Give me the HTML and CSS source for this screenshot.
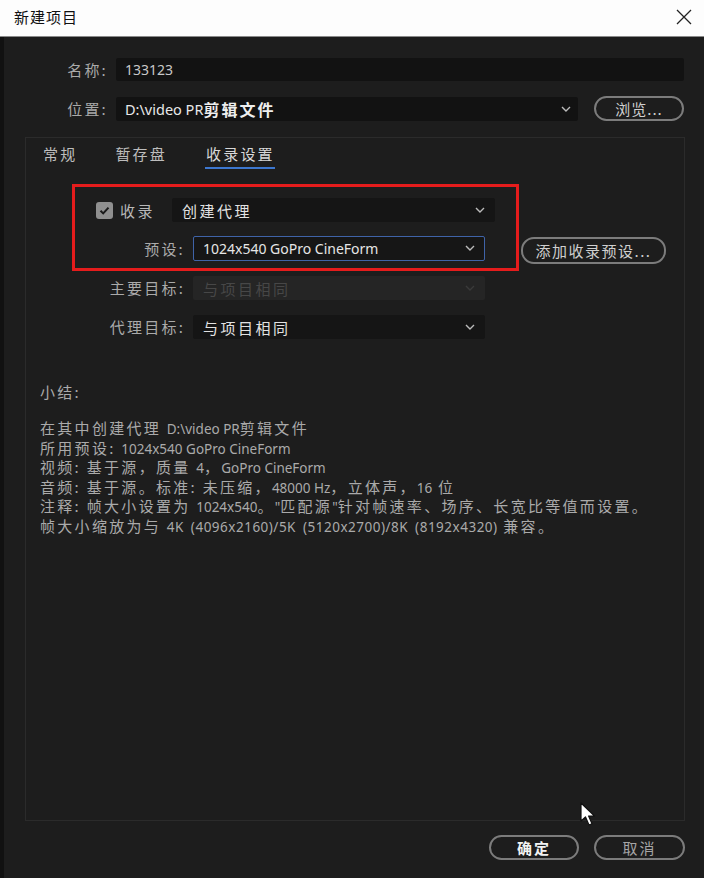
FILE: index.html
```html
<!DOCTYPE html>
<html lang="zh">
<head>
<meta charset="utf-8">
<link rel="stylesheet" href="styles.css">
</head>
<body>
<div class="window">
  <div class="titlebar">
    <span class="title">新建项目</span>
    <svg class="close" width="16" height="16" viewBox="0 0 16 16"><path d="M1 1L15 15M15 1L1 15" stroke="#222" stroke-width="1.3" fill="none"/></svg>
  </div>
  <div class="body">
    <div class="row row-name">
      <span class="lbl lbl-top">名称:</span>
      <div class="input name-input"><span class="lat">133123</span></div>
    </div>
    <div class="row row-loc">
      <span class="lbl lbl-top">位置:</span>
      <div class="input loc-input"><span class="lat loc-lat">D:\video PR</span><span class="cjk">剪辑文件</span>
        <svg class="chev" width="10" height="6" viewBox="0 0 10 6"><path d="M1 1L5 5L9 1" stroke="#bbb" stroke-width="1.4" fill="none"/></svg>
      </div>
      <div class="btn browse">浏览...</div>
    </div>

    <div class="panel">
      <div class="tabs">
        <span class="tab">常规</span>
        <span class="tab">暂存盘</span>
        <span class="tab active">收录设置</span>
      </div>

      <div class="redbox">
        <div class="rb-row1">
          <span class="checkbox"><svg width="13" height="13" viewBox="0 0 13 13"><path d="M2.5 6.8L5.2 9.4L10.5 3.6" stroke="#1a1a1a" stroke-width="2" fill="none"/></svg></span>
          <span class="cb-label">收录</span>
          <div class="dd dd-create"><span class="dd-text">创建代理</span>
            <svg class="chev" width="10" height="6" viewBox="0 0 10 6"><path d="M1 1L5 5L9 1" stroke="#bbb" stroke-width="1.4" fill="none"/></svg>
          </div>
        </div>
        <div class="rb-row2">
          <span class="lbl lbl-rb">预设:</span>
          <div class="dd dd-focus"><span class="lat preset-lat">1024x540 GoPro CineForm</span>
            <svg class="chev" width="10" height="6" viewBox="0 0 10 6"><path d="M1 1L5 5L9 1" stroke="#bbb" stroke-width="1.4" fill="none"/></svg>
          </div>
        </div>
      </div>

      <div class="add-btn-wrap"><div class="btn add-btn">添加收录预设...</div></div>

      <div class="frow frow-main">
        <span class="lbl lbl-panel">主要目标:</span>
        <div class="dd dd-disabled"><span class="dd-text dim">与项目相同</span>
          <svg class="chev" width="10" height="6" viewBox="0 0 10 6"><path d="M1 1L5 5L9 1" stroke="#3a3a3a" stroke-width="1.4" fill="none"/></svg>
        </div>
      </div>
      <div class="frow frow-proxy">
        <span class="lbl lbl-panel">代理目标:</span>
        <div class="dd"><span class="dd-text">与项目相同</span>
          <svg class="chev" width="10" height="6" viewBox="0 0 10 6"><path d="M1 1L5 5L9 1" stroke="#bbb" stroke-width="1.4" fill="none"/></svg>
        </div>
      </div>

      <div class="summary">
        <div class="sum-title">小结:</div>
        <div class="sum-lines">
          <div class="sl">在其中创建代理 <span class="lat">D:\video PR</span>剪辑文件</div>
          <div class="sl">所用预设: <span class="lat">1024x540 GoPro CineForm</span></div>
          <div class="sl">视频: 基于源，质量 <span class="lat">4</span>，<span class="lat">GoPro CineForm</span></div>
          <div class="sl">音频: 基于源。标准: 未压缩，<span class="lat">48000 Hz</span>，立体声，<span class="lat">16</span> 位</div>
          <div class="sl">注释: 帧大小设置为 <span class="lat">1024x540</span>。<span class="lat">"</span>匹配源<span class="lat">"</span>针对帧速率、场序、长宽比等值而设置。</div>
          <div class="sl">帧大小缩放为与 <span class="lat wide">4K (4096x2160)/5K (5120x2700)/8K (8192x4320)</span> 兼容。</div>
        </div>
      </div>
    </div>

    <div class="footer">
      <div class="btn ok">确定</div>
      <div class="btn cancel">取消</div>
    </div>
  </div>
  <svg class="cursor" width="18" height="26" viewBox="0 0 18 26"><path d="M1 1L1 19L5.5 15L9 23L12 21.7L8.6 14L14.5 14Z" fill="#fff" stroke="#111" stroke-width="1.2" stroke-linejoin="round"/></svg>
</div>
</body>
</html>
```

FILE: styles.css
```css
* { box-sizing: border-box; }
html, body { margin: 0; padding: 0; }
body {
  width: 704px;
  height: 878px;
  background: #1d1d1d;
  font-family: "Noto Sans CJK SC", "Noto Sans", sans-serif;
  color: #b4b4b4;
  overflow: hidden;
}
.window {
  position: relative;
  width: 704px;
  height: 878px;
}
.titlebar {
  height: 37px;
  background: #fdfdfd;
  display: flex;
  align-items: center;
  justify-content: space-between;
  padding: 0 12px 3px 14px;
  border-bottom: 1px solid #8a8a8a;
}
.title {
  font-size: 15px;
  color: #111;
  letter-spacing: 1px;
}
.body {
  height: 841px;
  border-left: 4px solid #111;
  padding-top: 21px;
}
.row {
  display: flex;
  align-items: center;
}
.lbl {
  font-size: 15px;
  text-align: right;
  color: #aaa;
  letter-spacing: 2.2px;
  flex: none;
  line-height: 20px;
}
.lbl-top { width: 104px; margin-right: 8px; }
.lat {
  font-family: "Noto Sans", sans-serif;
  font-size: 13.5px;
  letter-spacing: -0.3px;
}
.name-input .lat { font-size: 14px; letter-spacing: 0; color: #c8c8c8; }
.loc-lat { font-size: 14.5px; letter-spacing: 0; color: #e8e8e8; }
.cjk { font-size: 16px; letter-spacing: 2px; color: #eeeeee; font-weight: bold; }
.input {
  height: 23px;
  background: #121212;
  border-radius: 2px;
  display: flex;
  align-items: center;
  padding-left: 9px;
  position: relative;
  color: #c8c8c8;
}
.name-input { width: 568px; }
.row-loc { margin-top: 15px; }
.loc-input { width: 462px; height: 24px; }
.loc-input .chev { position: absolute; right: 7px; top: 9px; }
.btn {
  border: 2px solid #7c7c7c;
  border-radius: 13px;
  display: flex;
  align-items: center;
  justify-content: center;
  font-size: 15px;
  letter-spacing: 1px;
  color: #cfcfcf;
  background: #1d1d1d;
}
.browse { width: 90px; height: 25px; margin-left: 16px; }

.panel {
  margin: 16px 0 0 21px;
  width: 660px;
  height: 684px;
  border: 1px solid #2b2b2b;
  position: relative;
}
.tabs {
  display: flex;
  padding-left: 17px;
  height: 46px;
}
.tab {
  font-size: 15px;
  letter-spacing: 2.2px;
  color: #bdbdbd;
  padding-top: 5px;
  line-height: 22px;
  height: 31px;
  margin-right: 38px;
}
.tab.active {
  color: #d8d8d8;
  border-bottom: 2px solid #3d77cf;
  padding-left: 1px;
}

.redbox {
  margin-left: 46px;
  width: 447px;
  height: 87px;
  border: 3px solid #e51c1c;
  padding-top: 11px;
}
.rb-row1 {
  display: flex;
  align-items: center;
  height: 24px;
}
.checkbox {
  margin-left: 21px;
  width: 17px;
  height: 17px;
  background: #8f8f8f;
  border-radius: 3px;
  display: flex;
  align-items: center;
  justify-content: center;
}
.cb-label {
  margin-left: 7px;
  font-size: 15px;
  letter-spacing: 2.5px;
  color: #b8b8b8;
  width: 52px;
}
.dd {
  height: 24px;
  width: 292px;
  background: #151515;
  border-radius: 2px;
  display: flex;
  align-items: center;
  padding-left: 10px;
  position: relative;
}
.dd .chev { position: absolute; right: 10px; top: 9px; }
.dd-text {
  font-size: 15px;
  letter-spacing: 2.5px;
  color: #e2e2e2;
}
.dd-text.dim { color: #474747; }
.dd-create { width: 323px; }
.rb-row2 {
  display: flex;
  align-items: center;
  margin-top: 14px;
}
.lbl-rb { width: 110px; margin-right: 8px; }
.dd-focus {
  height: 25px;
  border: 1px solid #3f63a8;
  background: #161616;
  padding-left: 9px;
}
.preset-lat { font-size: 14px; letter-spacing: 0; color: #e6e6e6; }
.dd-focus .chev { right: 9px; top: 8px; }
.add-btn-wrap {
  position: absolute;
  left: 495px;
  top: 99px;
}
.add-btn { width: 145px; height: 27px; letter-spacing: 1.5px; }

.frow {
  display: flex;
  align-items: center;
  height: 24px;
}
.frow-main { margin-top: 5px; }
.frow-proxy { margin-top: 15px; }
.lbl-panel { width: 159px; margin-right: 8px; }
.dd-disabled { background: #252525; }

.summary {
  margin-top: 42px;
  padding-left: 14px;
  font-size: 15px;
  color: #aaaaaa;
  letter-spacing: 2.3px;
}
.sum-title { line-height: 22px; height: 22px; }
.sum-lines {
  margin-top: 15px;
}
.sl {
  height: 19.6px;
  line-height: 19.6px;
  white-space: nowrap;
}
.sum-lines .lat { font-size: 13.5px; letter-spacing: 0; line-height: 19.6px; }
.sum-lines .lat.wide { letter-spacing: 0.5px; word-spacing: 3px; }

.footer {
  display: flex;
  justify-content: flex-end;
  gap: 15px;
  margin-top: 14px;
  width: 681px;
}
.ok { width: 90px; height: 25px; color: #f2f2f2; font-weight: bold; letter-spacing: 2px; }
.cancel { width: 91px; height: 25px; color: #a5a5a5; letter-spacing: 2px; }

.cursor {
  position: absolute;
  left: 580px;
  top: 802px;
}
```
